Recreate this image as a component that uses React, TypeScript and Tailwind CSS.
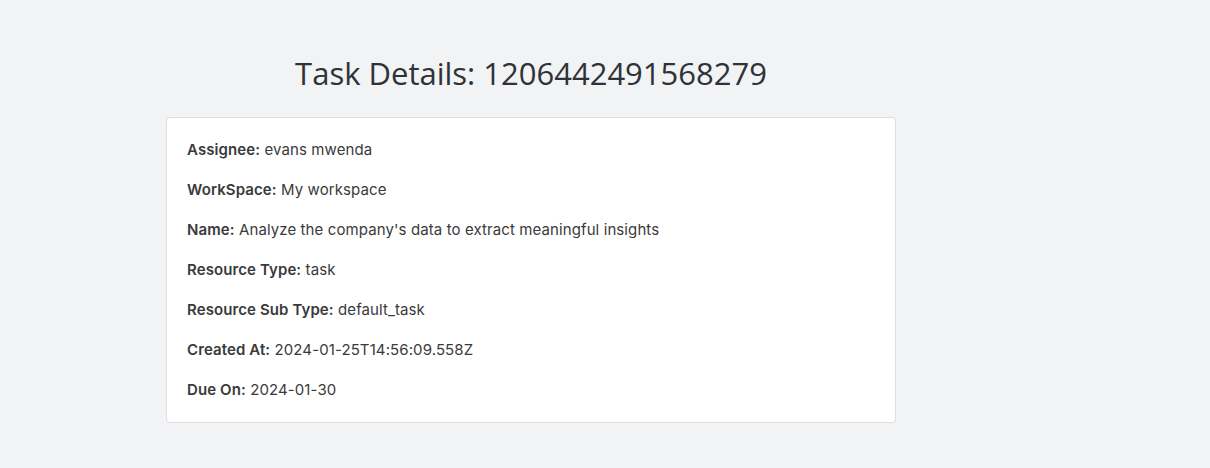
const rows: [string, string][] = [
  ["Assignee:", "evans mwenda"],
  ["WorkSpace:", "My workspace"],
  ["Name:", "Analyze the company's data to extract meaningful insights"],
  ["Resource Type:", "task"],
  ["Resource Sub Type:", "default_task"],
  ["Created At:", "2024-01-25T14:56:09.558Z"],
  ["Due On:", "2024-01-30"],
];

export default function App() {
  return (
    <div className="min-h-[468px] w-full bg-[#f2f3f5] pt-[53px] font-['Open_Sans',sans-serif]">
      <div className="ml-[166px] w-[730px]">
        <h1 className="mb-6 text-center text-[31px] leading-[40px] font-normal text-[#2f3237]">
          Task Details: 1206442491568279
        </h1>
        <div className="rounded border border-[#dcdde0] bg-white p-5 font-['Inter',sans-serif] text-[15px] tracking-[0.1px] text-[#3a3a3a]">
          <div className="flex flex-col gap-4">
            {rows.map(([label, value]) => (
              <p key={label} className="leading-6">
                <span className="font-semibold">{label}</span> {value}
              </p>
            ))}
          </div>
        </div>
      </div>
    </div>
  );
}
